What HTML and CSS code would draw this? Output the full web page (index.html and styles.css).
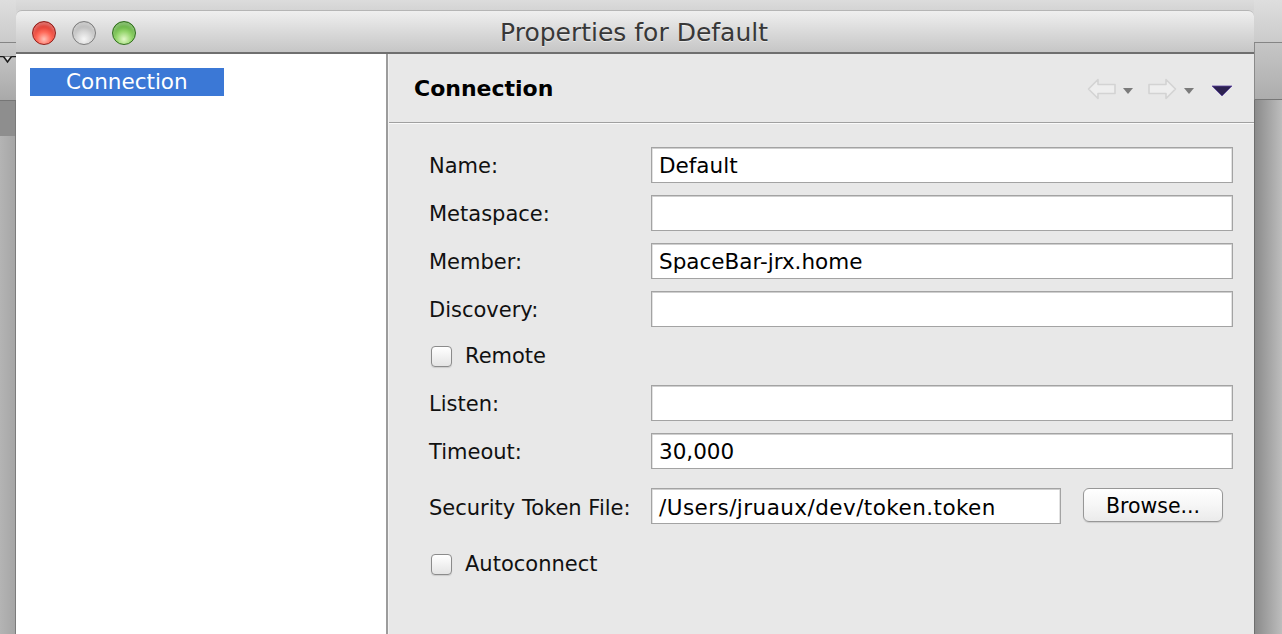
FILE: index.html
```html
<!DOCTYPE html>
<html>
<head>
<meta charset="utf-8">
<title>Properties for Default</title>
<link rel="stylesheet" href="styles.css">
</head>
<body>
<div class="desktop">
  <div class="strip strip-left">
    <div class="s-top"></div>
    <div class="s-mid">
      <svg class="s-tri" width="16" height="8" viewBox="0 0 16 8"><path d="M0 0.5 H16" stroke="#1a1a1a" stroke-width="1.5"/><path d="M3.5 0.5 L7.5 6 L11.5 0.5" fill="#e0e0e0" stroke="#1a1a1a" stroke-width="1.5"/></svg>
    </div>
    <div class="s-dark"></div>
    <div class="s-rest"></div>
  </div>

  <div class="center">
    <div class="gap-top"></div>
    <div class="window">
      <div class="titlebar">
        <div class="lights">
          <span class="light red"></span>
          <span class="light gray"></span>
          <span class="light green"></span>
        </div>
        <div class="title">Properties for Default</div>
      </div>
      <div class="content">
        <div class="tree">
          <div class="tree-item selected">Connection</div>
        </div>
        <div class="divider"></div>
        <div class="page">
          <div class="page-header">
            <h1 class="page-title">Connection</h1>
            <svg class="nav" width="148" height="24" viewBox="0 0 148 24">
              <path d="M2.5 12 L12 2.5 L12 7.5 L29 7.5 L29 16.5 L12 16.5 L12 21.5 Z" fill="#eeeeee" stroke="#d3d3d3" stroke-width="1.6" stroke-linejoin="round"/>
              <polygon points="37,11 47,11 42,17" fill="#7b7b7b"/>
              <path d="M89.5 12 L80 2.5 L80 7.5 L63 7.5 L63 16.5 L80 16.5 L80 21.5 Z" fill="#eeeeee" stroke="#d3d3d3" stroke-width="1.6" stroke-linejoin="round"/>
              <polygon points="98,11 108,11 103,17" fill="#7b7b7b"/>
              <polygon points="126,9 146,9 136,19" fill="#2c2150" stroke="#5a43a0" stroke-width="0.8"/>
            </svg>
          </div>
          <div class="form">
            <label class="lbl">Name:</label>
            <div class="field">Default</div>

            <label class="lbl">Metaspace:</label>
            <div class="field"></div>

            <label class="lbl">Member:</label>
            <div class="field">SpaceBar-jrx.home</div>

            <label class="lbl">Discovery:</label>
            <div class="field"></div>

            <div class="check-row"><span class="checkbox"></span><span class="check-label">Remote</span></div>

            <label class="lbl">Listen:</label>
            <div class="field"></div>

            <label class="lbl">Timeout:</label>
            <div class="field">30,000</div>

            <label class="lbl row-token">Security Token File:</label>
            <div class="token-cell row-token">
              <div class="field field-token">/Users/jruaux/dev/token.token</div>
              <button class="button">Browse...</button>
            </div>

            <div class="check-row row-auto"><span class="checkbox"></span><span class="check-label">Autoconnect</span></div>
          </div>
        </div>
      </div>
    </div>
  </div>

  <div class="strip strip-right">
    <div class="s-top"></div>
    <div class="s-mid"></div>
    <div class="s-rest"></div>
  </div>
</div>
</body>
</html>
```

FILE: styles.css
```css
* { box-sizing: border-box; }

html, body {
  margin: 0;
  padding: 0;
  width: 1282px;
  height: 634px;
  overflow: hidden;
  font-family: "DejaVu Sans", "Liberation Sans", sans-serif;
  background: #d6d6d6;
}

.desktop {
  display: grid;
  grid-template-columns: 16px 1238px 28px;
  height: 634px;
}

/* ---------- side strips (neighbouring windows) ---------- */
.strip {
  display: flex;
  flex-direction: column;
  height: 634px;
}
.s-top {
  height: 43px;
  background: linear-gradient(#dedede, #cbcbcb);
  border-bottom: 1px solid #858585;
}
.strip-left .s-mid {
  height: 58px;
  padding-top: 13px;
  background: linear-gradient(#cacaca, #a9a9a9);
  border-bottom: 1px solid #767676;
}
.s-tri { display: block; }
.s-dark {
  height: 35px;
  background: #8e8e8e;
  border-right: 1px solid #7a7a7a;
}
.strip-left .s-rest {
  flex: 1;
  background: linear-gradient(90deg, #b4b4b4, #a6a6a6);
  border-right: 1px solid #7c7c7c;
}
.strip-right .s-mid {
  height: 57px;
  background: linear-gradient(#c6c6c6, #adadad);
  border-bottom: 1px solid #777777;
  border-left: 1px solid #8a8a8a;
}
.strip-right .s-rest {
  flex: 1;
  background: linear-gradient(90deg, #8b8b8b, #bdbdbd);
  border-left: 1px solid #6e6e6e;
}

/* ---------- centre window ---------- */
.center {
  display: flex;
  flex-direction: column;
  height: 634px;
}
.gap-top {
  height: 10px;
  background: linear-gradient(#dcdcdc, #d4d4d4);
}
.window {
  flex: 1;
  display: flex;
  flex-direction: column;
  min-height: 0;
}

.titlebar {
  height: 44px;
  position: relative;
  display: flex;
  align-items: center;
  justify-content: center;
  background: linear-gradient(#efefef, #d8d8d8 55%, #c6c6c6);
  border-top: 1px solid #b5b5b5;
  border-bottom: 2px solid #6f6f6f;
  border-radius: 6px 6px 0 0;
}
.lights {
  position: absolute;
  left: 16px;
  top: 10px;
  display: flex;
  gap: 16px;
}
.light {
  width: 24px;
  height: 24px;
  border-radius: 50%;
  display: block;
}
.light.red {
  background: radial-gradient(circle at 50% 78%, #ffc2b8 0, #ff6a5a 35%, #d32a22 75%, #b01d18 100%);
  border: 1px solid #8e1f1a;
  box-shadow: inset 0 3px 3px rgba(255,255,255,0.35);
}
.light.gray {
  background: radial-gradient(circle at 50% 78%, #f6f6f6 0, #d4d4d4 40%, #a9a9a9 80%, #999 100%);
  border: 1px solid #7d7d7d;
  box-shadow: inset 0 3px 3px rgba(255,255,255,0.4);
}
.light.green {
  background: radial-gradient(circle at 50% 78%, #e2f8c8 0, #94d56c 38%, #4d9f2c 78%, #3c8422 100%);
  border: 1px solid #2f6d1c;
  box-shadow: inset 0 3px 3px rgba(255,255,255,0.35);
}
.title {
  font-size: 25px;
  color: #383838;
  text-shadow: 0 1px 0 rgba(255,255,255,0.55);
  margin: 1px 0 0 -2px;
}

.content {
  flex: 1;
  display: flex;
  min-height: 0;
}

.tree {
  width: 370px;
  background: #ffffff;
  padding: 14px 0 0 14px;
}
.tree-item {
  width: 194px;
  height: 28px;
  line-height: 28px;
  padding-left: 36px;
  font-size: 21.5px;
  color: #ffffff;
}
.tree-item.selected { background: #3b78d6; }

.divider {
  width: 3px;
  background: #9c9c9c;
  border-right: 1px solid #f2f2f2;
}

.page {
  flex: 1;
  background: #e8e8e8;
  display: flex;
  flex-direction: column;
}
.page-header {
  height: 69px;
  display: flex;
  align-items: center;
  justify-content: space-between;
  padding: 1px 20px 0 25px;
  border-bottom: 1px solid #a0a0a0;
}
.page-title {
  margin: 0;
  font-size: 22px;
  font-weight: bold;
  color: #000;
}
.nav { display: block; }

.form {
  border-top: 1px solid #fafafa;
  padding: 23px 0 0 40px;
  display: grid;
  grid-template-columns: 222px 582px;
  grid-auto-rows: auto;
  row-gap: 12px;
}
.lbl {
  font-size: 21px;
  color: #111;
  display: flex;
  align-items: center;
  white-space: nowrap;
  padding-top: 2px;
}
.field {
  height: 36px;
  background: #ffffff;
  border: 1px solid #a3a3a3;
  box-shadow: inset 0 1px 0 #cfcfcf, inset 1px 0 0 #e2e2e2, inset -1px 0 0 #e2e2e2;
  font-size: 21.5px;
  color: #000;
  padding: 1px 0 0 7px;
  display: flex;
  align-items: center;
  white-space: nowrap;
}
.check-row {
  grid-column: 1 / 3;
  height: 34px;
  display: flex;
  align-items: center;
  padding-left: 2px;
}
.checkbox {
  width: 21px;
  height: 21px;
  border: 1px solid #8b8b8b;
  border-radius: 4px;
  background: linear-gradient(#ffffff, #e4e4e4);
  box-shadow: 0 1px 1px rgba(0,0,0,0.12);
  margin-right: 13px;
}
.check-label {
  font-size: 21px;
  color: #111;
}
.row-token { margin-top: 7px; }
.lbl.row-token { padding-top: 4px; }
.row-auto { margin-top: 11px; }
.token-cell {
  display: flex;
  align-items: flex-start;
  gap: 22px;
}
.field-token {
  width: 410px;
  letter-spacing: 0.45px;
  padding-top: 2px;
}
.button {
  width: 140px;
  height: 34px;
  border: 1px solid #979797;
  border-radius: 6px;
  background: linear-gradient(#ffffff, #f6f6f6 50%, #ebebeb);
  box-shadow: 0 1px 1px rgba(0,0,0,0.12);
  font-family: "DejaVu Sans", "Liberation Sans", sans-serif;
  font-size: 20.5px;
  color: #000;
  padding: 2px 0 0 0;
}
```
